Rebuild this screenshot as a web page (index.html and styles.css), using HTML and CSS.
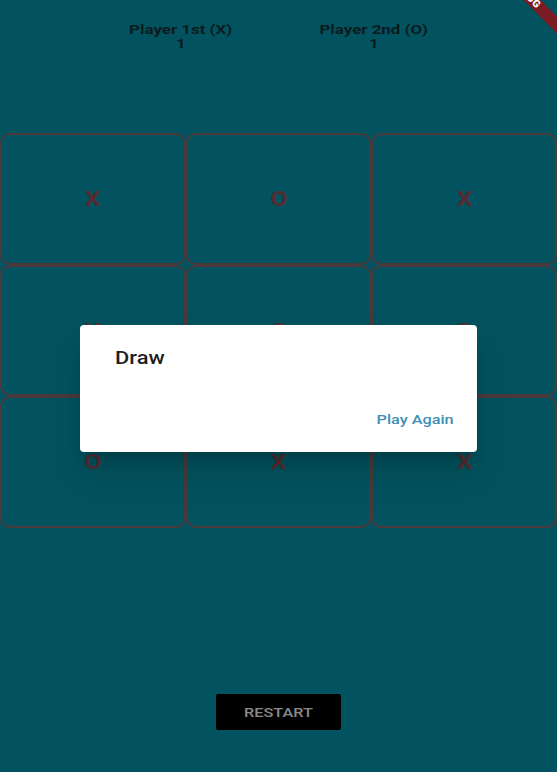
FILE: index.html
```html
<!DOCTYPE html>
<html>
<head>
<meta charset="utf-8">
<link rel="stylesheet" href="styles.css">
</head>
<body>
<div class="app">
  <div class="scores">
    <div class="score"><div class="wide head">Player 1st (X)</div><div class="wide head">1</div></div>
    <div class="score"><div class="wide head">Player 2nd (O)</div><div class="wide head">1</div></div>
  </div>
  <div class="board">
    <div class="cell"><span class="mark">X</span></div>
    <div class="cell"><span class="mark">O</span></div>
    <div class="cell"><span class="mark">X</span></div>
    <div class="cell"><span class="mark">X</span></div>
    <div class="cell"><span class="mark">O</span></div>
    <div class="cell"><span class="mark">O</span></div>
    <div class="cell"><span class="mark">O</span></div>
    <div class="cell"><span class="mark">X</span></div>
    <div class="cell"><span class="mark">X</span></div>
  </div>
  <div class="spacer"></div>
  <div class="footer"><button class="restart"><span class="wide">RESTART</span></button></div>

  <div class="dialog">
    <div class="dialog-title"><span class="wide left">Draw</span></div>
    <div class="dialog-actions"><span class="action wide right">Play Again</span></div>
  </div>

  <div class="banner">DEBUG</div>
</div>
</body>
</html>
```
FILE: styles.css
```css
* { box-sizing: border-box; }
html, body { margin: 0; padding: 0; }
body {
  width: 557px;
  height: 772px;
  overflow: hidden;
  font-family: Roboto, "Liberation Sans", Arial, sans-serif;
  background: #02535f;
}
.app {
  position: relative;
  width: 557px;
  height: 772px;
  display: flex;
  flex-direction: column;
  background: #02535f;
  overflow: hidden;
}
.wide {
  display: inline-block;
  transform: scaleX(1.25);
  transform-origin: center;
}
.wide.head { transform: scaleX(1.3); }
.wide.left { transform-origin: left center; }
.wide.right { transform-origin: right center; }
.scores {
  height: 133px;
  padding-top: 23px;
  display: flex;
  justify-content: center;
  gap: 112px;
}
.score {
  display: flex;
  flex-direction: column;
  align-items: center;
  font-weight: 700;
  font-size: 13px;
  line-height: 14px;
  color: #0b1b1e;
}
.board {
  display: grid;
  grid-template-columns: repeat(3, 1fr);
  grid-template-rows: repeat(3, 131.7px);
}
.cell {
  border: 2.5px solid #4a3a3c;
  border-radius: 10px;
  display: flex;
  align-items: center;
  justify-content: center;
}
.mark {
  display: inline-block;
  font-size: 20px;
  font-weight: 700;
  color: #552b31;
  transform: scaleX(1.25);
}
.spacer { flex: 1; }
.footer {
  display: flex;
  justify-content: center;
  padding-bottom: 42px;
}
.restart {
  width: 125px;
  height: 36px;
  background: #000;
  border: none;
  border-radius: 2px;
  color: #8a8a8a;
  font-family: Roboto, "Liberation Sans", Arial, sans-serif;
  font-size: 13px;
  font-weight: 500;
  padding: 0;
}
.dialog {
  position: absolute;
  left: 80px;
  top: 325px;
  width: 397px;
  height: 127px;
  background: #fff;
  border-radius: 4px;
  box-shadow: 0 11px 15px -7px rgba(0,0,0,.2), 0 24px 38px 3px rgba(0,0,0,.12);
  display: flex;
  flex-direction: column;
  justify-content: space-between;
  padding: 22px 23px 24px 35px;
}
.dialog-title {
  font-size: 17.5px;
  font-weight: 500;
  color: #1d1d1d;
  line-height: 22px;
}
.dialog-actions {
  display: flex;
  justify-content: flex-end;
}
.action {
  font-size: 13px;
  font-weight: 500;
  color: #3f8fb4;
  line-height: 16px;
}
.banner {
  position: absolute;
  left: 466px;
  top: -12px;
  width: 120px;
  height: 12px;
  background: #7a1c23;
  transform: rotate(45deg);
  color: #fff;
  font-size: 10.5px;
  font-weight: 900;
  line-height: 12px;
  text-align: center;
  letter-spacing: 0.6px;
}
```
